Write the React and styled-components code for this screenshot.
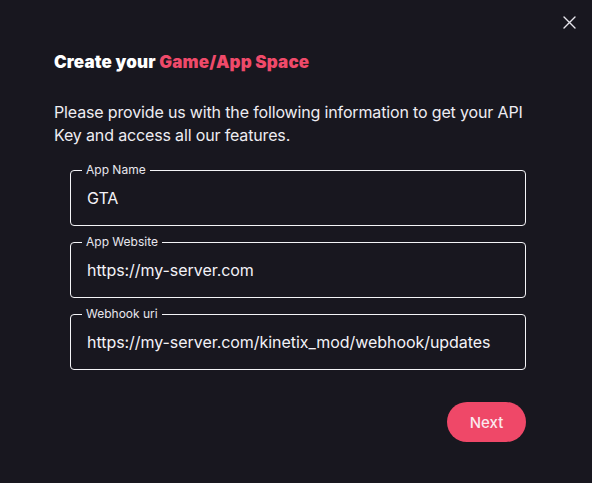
import React from "react";
import styled, { createGlobalStyle } from "styled-components";

const Global = createGlobalStyle`
  html, body { margin: 0; padding: 0; background: #18171f; }
  body { font-family: Inter, "Noto Sans", sans-serif; color: #f3f2f7; }
  * { box-sizing: border-box; }
`;

const Dialog = styled.div`
  position: relative;
  width: 592px;
  height: 483px;
  background: #18171f;
  padding: 50px 50px 0 54px;
`;

const Close = styled.button`
  position: absolute;
  top: 14px;
  right: 14px;
  width: 17px;
  height: 17px;
  padding: 0;
  border: none;
  background: transparent;
  display: flex;
  align-items: center;
  justify-content: center;
  cursor: pointer;
`;

const Title = styled.h2`
  margin: 0;
  font-size: 17px;
  line-height: 24px;
  font-weight: 900;
  letter-spacing: 0.15px;
  color: #ffffff;
`;

const Accent = styled.span`
  color: #ef4a6a;
`;

const Intro = styled.p`
  margin: 27px 0 0;
  font-size: 16px;
  line-height: 23px;
  font-weight: 400;
  color: #eeedf2;
  letter-spacing: -0.15px;
`;

const Form = styled.form`
  margin: 23px 0 0 16px;
  display: flex;
  flex-direction: column;
  gap: 16px;
  width: 456px;
`;

const Field = styled.div`
  position: relative;
  height: 56px;
  border: 1px solid #f4f4f7;
  border-radius: 4px;
  display: flex;
  align-items: center;
`;

const Label = styled.label`
  position: absolute;
  top: -8px;
  left: 11px;
  padding: 0 4px;
  background: #18171f;
  font-size: 12px;
  line-height: 14px;
  color: #e8e7ee;
`;

const Input = styled.input`
  width: 100%;
  height: 100%;
  border: none;
  outline: none;
  background: transparent;
  padding: 0 15px 0 16px;
  font-family: Inter, "Noto Sans", sans-serif;
  font-size: 16px;
  color: #f3f2f7;
  letter-spacing: -0.05px;
`;

const Actions = styled.div`
  margin: 32px 0 0 16px;
  display: flex;
  justify-content: flex-end;
  width: 456px;
`;

const Next = styled.button`
  width: 79px;
  height: 40px;
  border-radius: 20px;
  border: none;
  background: #ef4868;
  color: #fbe9ee;
  font-family: Inter, "Noto Sans", sans-serif;
  font-size: 15px;
  font-weight: 500;
  cursor: pointer;
`;

const fields = [
  { label: "App Name", value: "GTA" },
  { label: "App Website", value: "https://my-server.com" },
  { label: "Webhook uri", value: "https://my-server.com/kinetix_mod/webhook/updates" },
];

export default function App() {
  return (
    <>
      <Global />
      <Dialog>
        <Close aria-label="close">
          <svg width="13" height="13" viewBox="0 0 13 13">
            <path d="M1 1 L12 12 M12 1 L1 12" stroke="#e6e5ec" strokeWidth="1.4" strokeLinecap="round" />
          </svg>
        </Close>
        <Title>
          Create your <Accent>Game/App Space</Accent>
        </Title>
        <Intro>
          Please provide us with the following information to get your API Key and access all our features.
        </Intro>
        <Form onSubmit={(e) => e.preventDefault()}>
          {fields.map((f) => (
            <Field key={f.label}>
              <Label>{f.label}</Label>
              <Input defaultValue={f.value} />
            </Field>
          ))}
        </Form>
        <Actions>
          <Next>Next</Next>
        </Actions>
      </Dialog>
    </>
  );
}
